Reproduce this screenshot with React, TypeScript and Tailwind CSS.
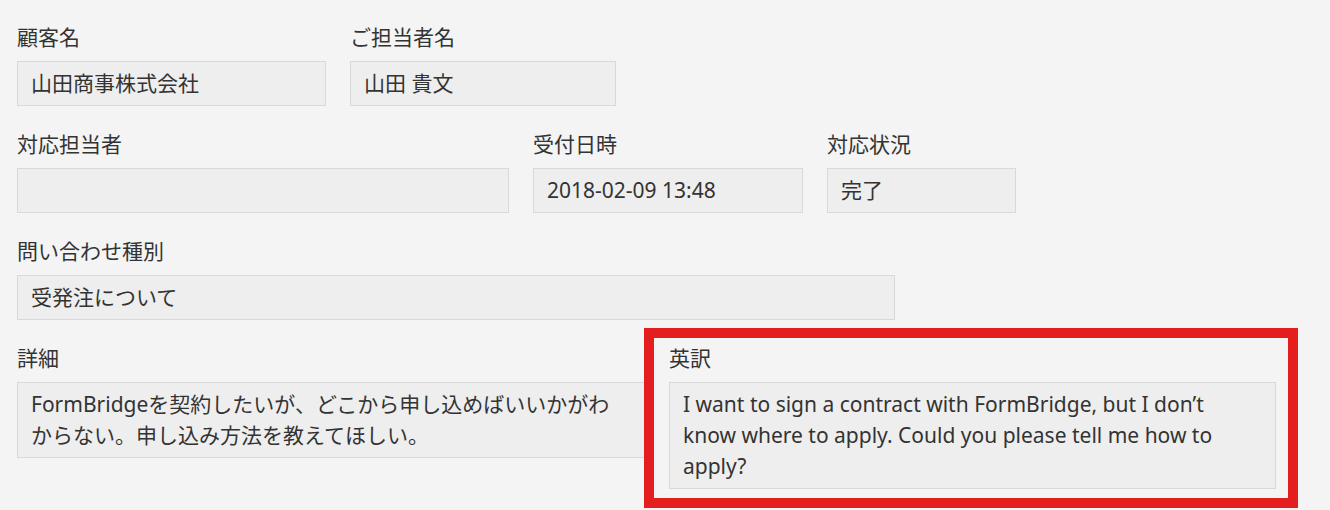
const font = "[font-family:'Noto_Sans','Noto_Sans_CJK_JP',sans-serif]";

function Field({
  label,
  value,
  width,
}: {
  label: string;
  value?: string;
  width: string;
}) {
  return (
    <div className={width}>
      <div className="mb-[8px] leading-[31px]">{label}</div>
      <div className="h-[45px] border border-[#d9d9d9] bg-[#eeeeee] px-[13px] py-[6px] leading-[31px] whitespace-nowrap">
        {value}
      </div>
    </div>
  );
}

export default function App() {
  return (
    <div
      className={`min-h-screen overflow-hidden bg-[#f4f4f4] pt-[22px] pl-[17px] text-[21px] text-[#333333] ${font}`}
    >
      <div className="mb-[23px] flex gap-[24px]">
        <Field label="顧客名" value="山田商事株式会社" width="w-[309px]" />
        <Field label="ご担当者名" value="山田 貴文" width="w-[266px]" />
      </div>

      <div className="mb-[23px] flex gap-[24px]">
        <Field label="対応担当者" width="w-[492px]" />
        <Field label="受付日時" value="2018-02-09 13:48" width="w-[270px]" />
        <Field label="対応状況" value="完了" width="w-[189px]" />
      </div>

      <div className="mb-[23px] flex">
        <Field label="問い合わせ種別" value="受発注について" width="w-[878px]" />
      </div>

      <div className="flex items-start">
        <div className="w-[628px] shrink-0">
          <div className="mb-[8px] leading-[31px]">詳細</div>
          <div className="border border-[#d9d9d9] bg-[#eeeeee] py-[6px] pr-[24px] pl-[13px] leading-[31px]">
            FormBridgeを契約したいが、どこから申し込めばいいかがわからない。申し込み方法を教えてほしい。
          </div>
        </div>

        {/* highlighted translation */}
        <div className="relative z-10 -mt-[15px] -ml-px w-[654px] shrink-0 border-[10px] border-[#e41d1f] bg-[#f4f4f4] pt-[5px] pr-[12px] pb-[9px] pl-[15px]">
          <div className="mb-[8px] leading-[31px]">英訳</div>
          <div className="w-[607px] border border-[#d9d9d9] bg-[#eeeeee] px-[13px] py-[6px] leading-[31px]">
            I want to sign a contract with FormBridge, but I don’t know where to apply. Could you please tell me how to apply?
          </div>
        </div>
      </div>
    </div>
  );
}
